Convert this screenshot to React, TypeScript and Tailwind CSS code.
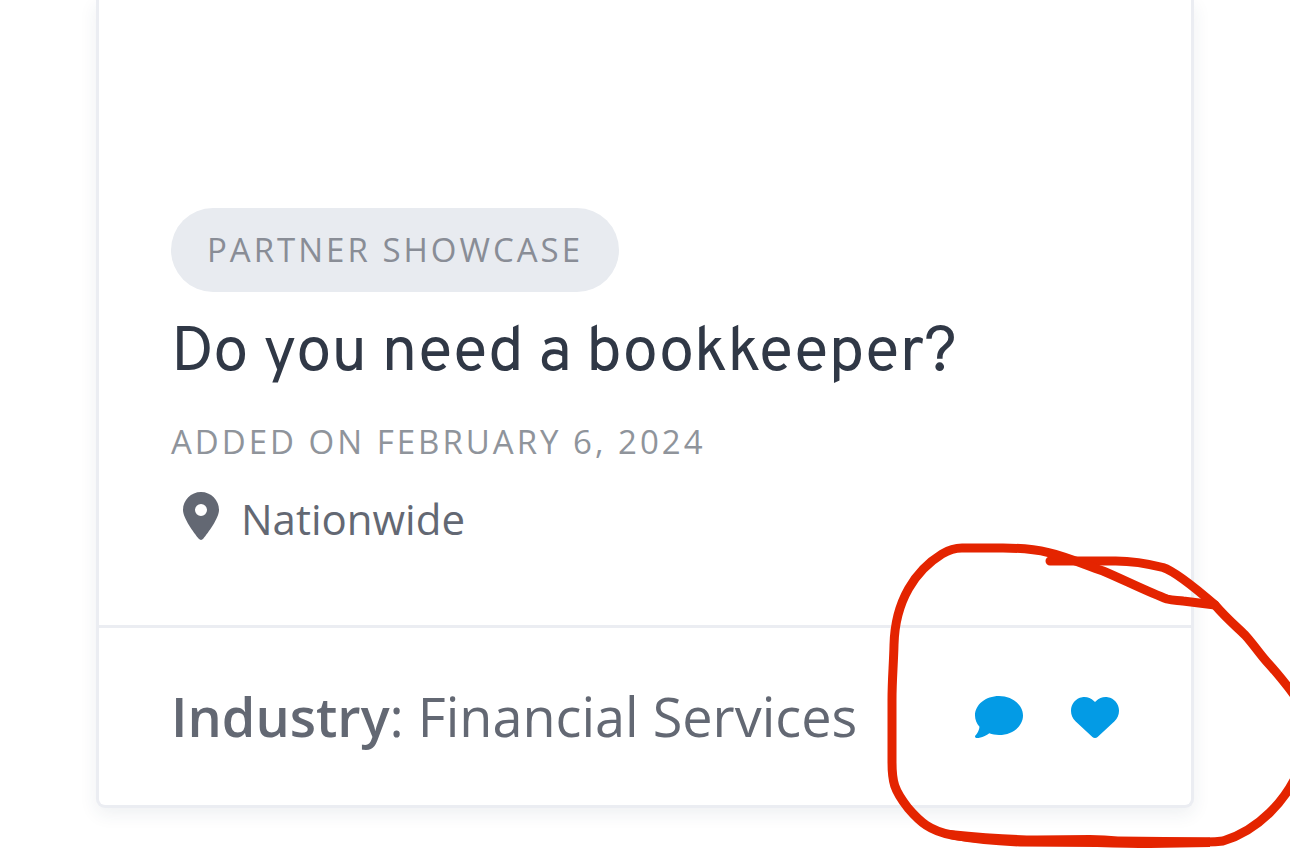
import React from 'react';
import { FaComment, FaHeart, FaLocationDot } from 'react-icons/fa6';

interface Listing {
  category: string;
  title: string;
  added: string;
  location: string;
  industry: string;
}

const listing: Listing = {
  category: 'Partner Showcase',
  title: 'Do you need a bookkeeper?',
  added: 'Added on February 6, 2024',
  location: 'Nationwide',
  industry: 'Financial Services',
};

function ListingCard({ item }: { item: Listing }) {
  return (
    <article className="mx-24 rounded-b-[9px] border-3 border-t-0 border-[#ebedf2] bg-white shadow-[0_6px_18px_rgba(40,60,90,0.08)]">
      {/* empty image area */}
      <div className="h-52" />

      <div className="px-18 pb-19">
        <a
          href="#category"
          className="inline-flex h-21 items-center rounded-full bg-[#e8ebf0] px-9 text-[33px] tracking-[3px] text-[#898d96] uppercase"
        >
          {item.category}
        </a>
        <h2 className="mt-[26px] font-['Overpass','Roboto',sans-serif] text-[63px] leading-[72px] text-[#303846]">
          <a href="#listing">{item.title}</a>
        </h2>
        <time
          dateTime="2024-02-06"
          className="mt-7 block text-[33px] leading-[48px] tracking-[3px] text-[#8f949b] uppercase"
        >
          {item.added}
        </time>
        <div className="mt-[23px] flex items-center gap-[22px] pl-3 text-[42px] leading-[60px]">
          <FaLocationDot className="h-12 w-9 -translate-y-[3px]" />
          <span>{item.location}</span>
        </div>
      </div>

      <footer className="flex items-center justify-between border-t-3 border-[#ebedf2] px-18 py-12">
        <div className="text-[54px] leading-[81px]">
          <strong className="font-semibold">Industry</strong>: {item.industry}
        </div>
        <div className="flex gap-12 text-5xl text-[#039be5]">
          <button type="button" aria-label="Reply to listing">
            <FaComment />
          </button>
          <button type="button" aria-label="Add to favorites">
            <FaHeart />
          </button>
        </div>
      </footer>
    </article>
  );
}

// hand-drawn marker around the card actions
function Marker() {
  return (
    <svg
      className="pointer-events-none absolute top-[530px] left-[870px] h-[331px] w-[440px]"
      viewBox="870 530 440 331"
      aria-hidden="true"
    >
      <g
        fill="none"
        stroke="#e42400"
        strokeWidth="9"
        strokeLinecap="round"
        strokeLinejoin="round"
      >
        <path d="M1050 561H1110Q1134 560 1163 567.500C1174 571 1200 592 1215 605C1228 620 1236 626 1245 635C1254 645 1259 653 1267 662C1279 675 1286 684 1298 700" />
        <path d="M1298 772C1286 799 1260 830 1223 841Q1216 842 1206 842H1120L1080 841H1030C1000 840 975 839 952 835C930 831 920 822 908 808C894 790 892 782 892 762V700C892 680 893.500 665 894 645C895 600 916 570 942 554Q952 548 962 548H1003C1050 548 1066 558 1103 571C1120 578 1150 593 1167 599C1174 601 1178 600 1183 601L1215 605" />
      </g>
      {/* the line gets heavier along the bottom */}
      <path
        fill="#e42400"
        d="M950 830Q1000 835 1037 835.500L1090 835Q1105 835 1118 836.500L1210 837.500V847L1150 848Q1130 848 1097 847L1020 846.500Q980 845 950 839Z"
      />
    </svg>
  );
}

export default function App() {
  return (
    <main className="relative min-h-screen overflow-hidden bg-white font-['Open_Sans',sans-serif] text-[#636873]">
      <ListingCard item={listing} />
      <Marker />
    </main>
  );
}
